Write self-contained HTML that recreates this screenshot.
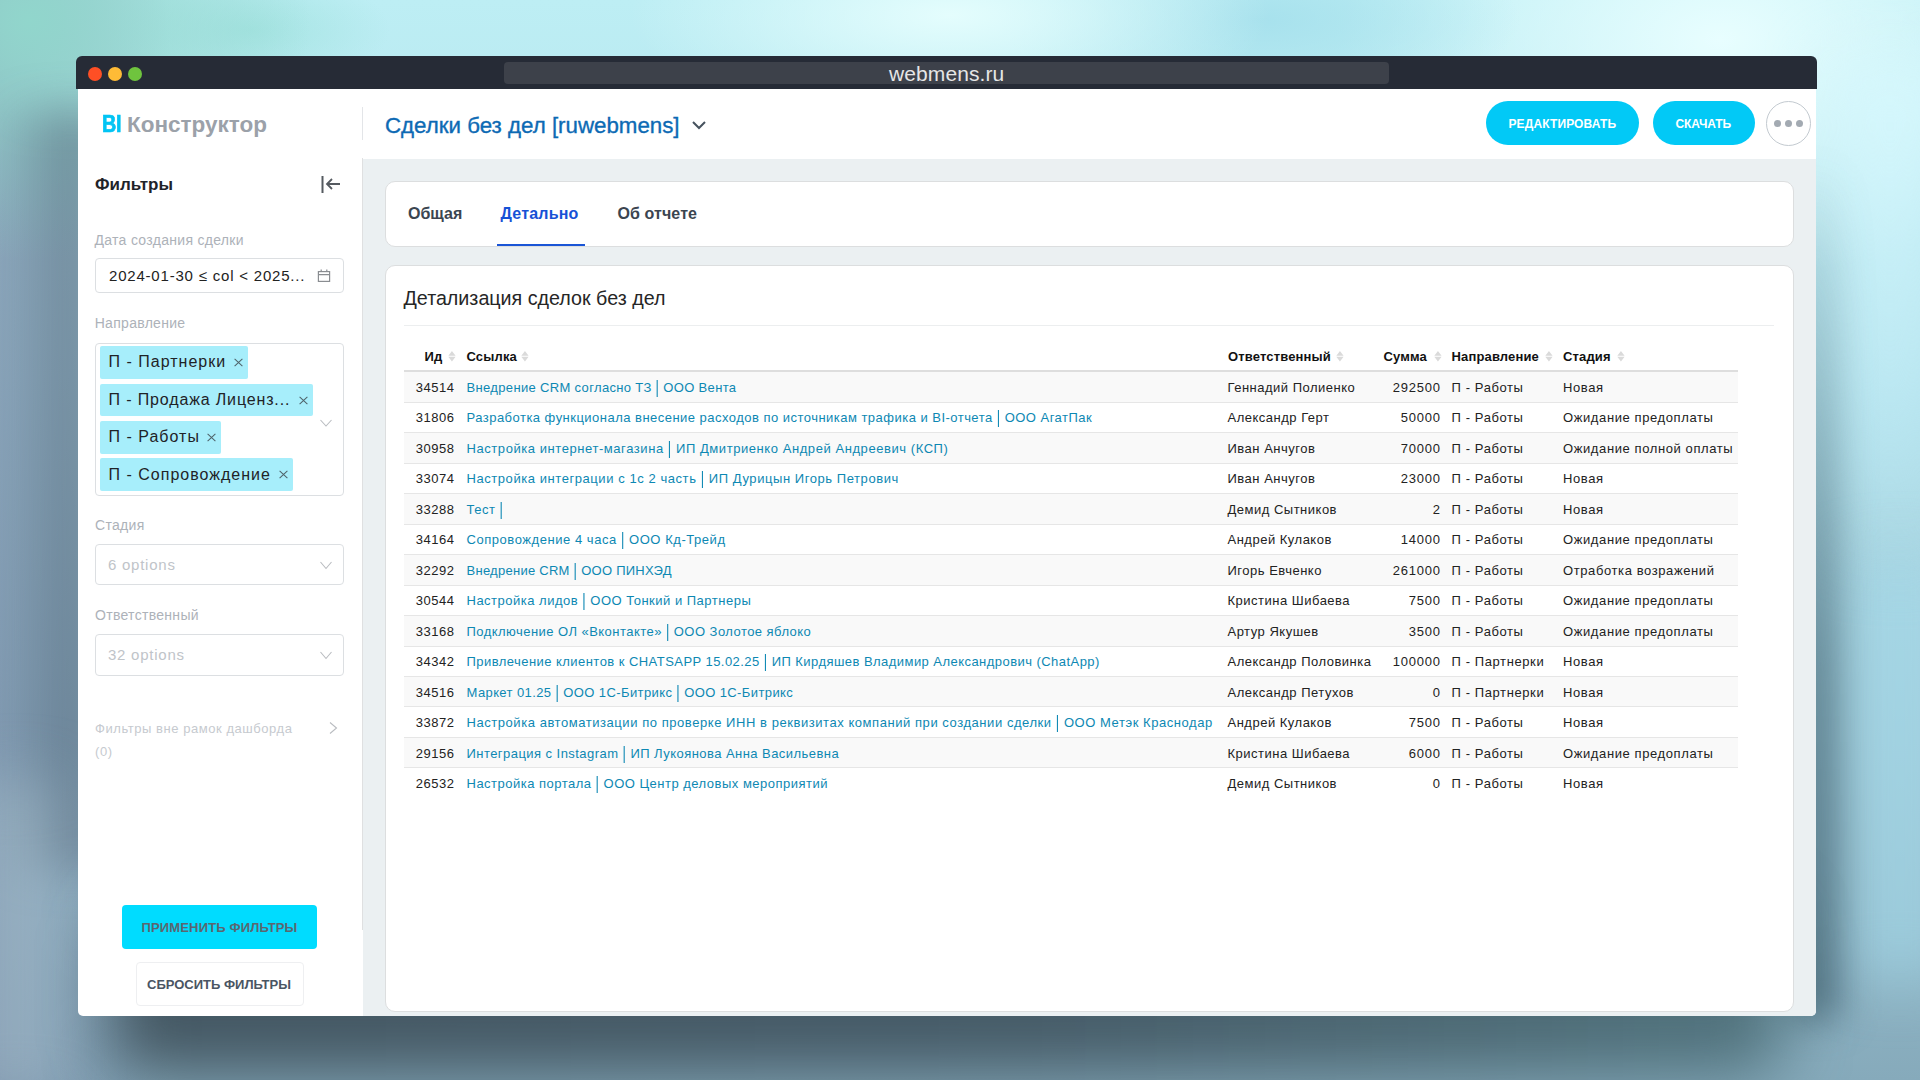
<!DOCTYPE html>
<html><head><meta charset="utf-8">
<style>
*{box-sizing:border-box;margin:0;padding:0}
html,body{width:1920px;height:1080px;overflow:hidden}
body{font-family:"Liberation Sans",sans-serif;position:relative;
background:
 radial-gradient(ellipse 280px 240px at 30px 20px, rgba(145,214,204,1) 0%, rgba(145,214,204,.6) 45%, rgba(145,214,204,0) 100%),
 radial-gradient(ellipse 140px 60px at 250px 30px, rgba(150,222,215,.6) 0%, rgba(150,222,215,0) 100%),
 radial-gradient(ellipse 320px 110px at 950px 15px, rgba(228,253,253,1) 0%, rgba(228,253,253,0) 100%),
 radial-gradient(ellipse 260px 90px at 1260px 20px, rgba(165,224,236,.9) 0%, rgba(165,224,236,0) 100%),
 radial-gradient(ellipse 380px 240px at 1720px 40px, rgba(232,254,255,1) 0%, rgba(232,254,255,0) 100%),
 linear-gradient(90deg, rgba(115,130,160,.6) 0px, rgba(115,130,160,0) 170px),
 linear-gradient(180deg,#bdeef4 0%,#b2e0ea 35%,#9cc6d4 70%,#86aabb 100%);
}
.t{position:absolute;white-space:nowrap}
.b{position:absolute}
#shadow{position:absolute;left:110px;top:900px;width:1675px;height:175px;background:linear-gradient(90deg,rgba(48,62,72,.78),rgba(48,64,75,.76) 55%,rgba(55,88,95,.68));filter:blur(32px);border-radius:40px}
#titlebar{position:absolute;left:76px;top:56px;width:1741px;height:33px;background:#262b36;border-radius:6px 6px 0 0}
.dot{position:absolute;top:67px;width:14px;height:14px;border-radius:50%}
#url{position:absolute;left:504px;top:62px;width:885px;height:22px;background:#3d414a;border-radius:4px}
#win{position:absolute;left:78px;top:89px;width:1738px;height:927px;background:#fff;border-radius:0 0 5px 5px;overflow:hidden}
#main{position:absolute;left:363px;top:159px;width:1453px;height:857px;background:#ebf0f2;border-radius:0 0 5px 0}
.card{position:absolute;left:385px;width:1409px;background:#fff;border:1px solid #dcdedf;border-radius:10px}
.pill{position:absolute;top:101px;height:44px;border-radius:22px;background:#02c9f6}
.inp{position:absolute;left:95px;width:249px;border:1px solid #dcdfe2;border-radius:4px;background:#fff}
.tag{position:absolute;left:100px;height:32.5px;background:#a7eefb;border-radius:2px}
.row{position:absolute;left:404px;width:1334px;height:30.48px;border-bottom:1px solid #e6e6e6}
.odd{background:#f9f9f9}
.lk{color:#1a8db5}
.tb{color:#222;letter-spacing:.5px}
</style></head>
<body>
<div class="b" style="left:10px;top:110px;width:90px;height:760px;background:linear-gradient(90deg,rgba(65,80,100,.15),rgba(65,80,100,.6));filter:blur(22px)"></div>
<div class="b" style="left:1830px;top:60px;width:120px;height:520px;background:linear-gradient(180deg,rgba(215,248,253,.9),rgba(190,235,246,.6) 70%,rgba(190,235,246,0));filter:blur(30px)"></div>
<div class="b" style="left:1850px;top:560px;width:100px;height:420px;background:rgba(165,218,235,.6);filter:blur(30px)"></div>
<div class="b" style="left:1790px;top:160px;width:50px;height:860px;background:linear-gradient(180deg,rgba(50,80,95,0),rgba(50,80,95,.25) 25%,rgba(50,80,95,.55) 60%,rgba(50,80,95,.6));filter:blur(18px)"></div>
<div class="b" style="left:-30px;top:780px;width:90px;height:320px;background:rgba(175,200,210,.45);filter:blur(30px)"></div>
<div id="shadow"></div>
<div id="titlebar"></div>
<div class="dot" style="left:88px;background:#fe4f25"></div>
<div class="dot" style="left:108px;background:#febb36"></div>
<div class="dot" style="left:128px;background:#6fc43e"></div>
<div id="url"></div>
<div class="t" style="left:889.00px;top:62.62px;font-size:21px;line-height:21px;color:#e6e6e6;letter-spacing:.1px;">webmens.ru</div>
<div id="win"></div>
<div id="main"></div>
<div class="t" style="left:101.60px;top:113.43px;font-size:23px;line-height:23px;color:#02c4f4;font-weight:bold;letter-spacing:-.3px;transform:scaleX(.86);transform-origin:0 0;-webkit-text-stroke:.7px #02c4f4;">BI</div>
<div class="t" style="left:127.00px;top:113.85px;font-size:22.5px;line-height:22.5px;color:#9ba1a9;font-weight:bold;letter-spacing:0px;">Конструктор</div>
<div class="b" style="left:362px;top:107px;width:1px;height:33px;background:#e3e5e8"></div>
<div class="t" style="left:385.00px;top:115.02px;font-size:22.3px;line-height:22.3px;color:#0d6ab4;-webkit-text-stroke:.35px #0d6ab4;">Сделки без дел [ruwebmens]</div>
<svg class="b" style="left:690px;top:118px" width="18" height="14" viewBox="0 0 18 14"><path d="M3 4 L9 10 L15 4" fill="none" stroke="#46525e" stroke-width="2"/></svg>
<div class="pill" style="left:1486px;width:153px"></div>
<div class="t" style="left:1508.50px;top:117.84px;font-size:12px;line-height:12px;color:#fff;font-weight:bold;letter-spacing:.12px;">РЕДАКТИРОВАТЬ</div>
<div class="pill" style="left:1653px;width:102px"></div>
<div class="t" style="left:1675.50px;top:117.84px;font-size:12px;line-height:12px;color:#fff;font-weight:bold;letter-spacing:-.1px;">СКАЧАТЬ</div>
<div class="b" style="left:1766px;top:101px;width:45px;height:45px;border-radius:50%;border:1px solid #c3cad0;background:#fff"></div>
<div class="b" style="left:1774.0px;top:120px;width:7px;height:7px;border-radius:50%;background:#a3aab2"></div>
<div class="b" style="left:1785.0px;top:120px;width:7px;height:7px;border-radius:50%;background:#a3aab2"></div>
<div class="b" style="left:1796.0px;top:120px;width:7px;height:7px;border-radius:50%;background:#a3aab2"></div>
<div class="b" style="left:362px;top:158.4px;width:1px;height:772px;background:#dfe0e1"></div>
<div class="t" style="left:95.00px;top:175.61px;font-size:17px;line-height:17px;color:#1f2329;font-weight:bold;">Фильтры</div>
<svg class="b" style="left:318px;top:174px" width="26" height="20" viewBox="0 0 26 20"><path d="M4.5 2 V19" stroke="#555a60" stroke-width="2" fill="none"/><path d="M22 10 H9 M14 5 L9 10 L14 15" stroke="#555a60" stroke-width="1.8" fill="none"/></svg>
<div class="t" style="left:94.50px;top:233.15px;font-size:14px;line-height:14px;color:#adb2b9;letter-spacing:.3px;">Дата создания сделки</div>
<div class="inp" style="top:258.4px;height:35px"></div>
<div class="t" style="left:109.00px;top:268.30px;font-size:15px;line-height:15px;color:#222;letter-spacing:.8px;">2024-01-30 ≤ col &lt; 2025...</div>
<svg class="b" style="left:316px;top:268px" width="16" height="16" viewBox="0 0 16 16"><rect x="2.4" y="3.6" width="11.2" height="9.8" fill="none" stroke="#8a8d91" stroke-width="1.2"/><path d="M2.4 6.6 H13.6 M5.2 1.6 V4 M10.8 1.6 V4" stroke="#8a8d91" stroke-width="1.2"/></svg>
<div class="t" style="left:94.70px;top:316.15px;font-size:14px;line-height:14px;color:#adb2b9;letter-spacing:.3px;">Направление</div>
<div class="inp" style="top:342.5px;height:153px"></div>
<div class="tag" style="top:346px;width:148px"></div>
<div class="t" style="left:108.60px;top:354.36px;font-size:16px;line-height:16px;color:#1f2327;letter-spacing:1px;">П - Партнерки</div>
<svg class="b" style="left:234px;top:358px" width="9" height="9" viewBox="0 0 9 9"><path d="M0.6 0.8 L8.4 8.2 M8.4 0.8 L0.6 8.2" stroke="#4f636a" stroke-width="1.05"/></svg>
<div class="tag" style="top:383.5px;width:213px"></div>
<div class="t" style="left:108.60px;top:391.86px;font-size:16px;line-height:16px;color:#1f2327;letter-spacing:.85px;">П - Продажа Лиценз...</div>
<svg class="b" style="left:299px;top:395.5px" width="9" height="9" viewBox="0 0 9 9"><path d="M0.6 0.8 L8.4 8.2 M8.4 0.8 L0.6 8.2" stroke="#4f636a" stroke-width="1.05"/></svg>
<div class="tag" style="top:421px;width:121px"></div>
<div class="t" style="left:108.60px;top:429.36px;font-size:16px;line-height:16px;color:#1f2327;letter-spacing:1px;">П - Работы</div>
<svg class="b" style="left:207px;top:433px" width="9" height="9" viewBox="0 0 9 9"><path d="M0.6 0.8 L8.4 8.2 M8.4 0.8 L0.6 8.2" stroke="#4f636a" stroke-width="1.05"/></svg>
<div class="tag" style="top:458.3px;width:193px"></div>
<div class="t" style="left:108.60px;top:466.66px;font-size:16px;line-height:16px;color:#1f2327;letter-spacing:1px;">П - Сопровождение</div>
<svg class="b" style="left:279px;top:470.3px" width="9" height="9" viewBox="0 0 9 9"><path d="M0.6 0.8 L8.4 8.2 M8.4 0.8 L0.6 8.2" stroke="#4f636a" stroke-width="1.05"/></svg>
<svg class="b" style="left:319px;top:418px" width="14" height="11" viewBox="0 0 14 11"><path d="M1.5 2 L7 8 L12.5 2" fill="none" stroke="#b9bcc0" stroke-width="1.1"/></svg>
<div class="t" style="left:95.00px;top:518.45px;font-size:14px;line-height:14px;color:#adb2b9;letter-spacing:.3px;">Стадия</div>
<div class="inp" style="top:544.2px;height:41.3px"></div>
<div class="t" style="left:108.00px;top:557.30px;font-size:15px;line-height:15px;color:#c0c4c9;letter-spacing:.75px;">6 options</div>
<svg class="b" style="left:319px;top:560px" width="14" height="11" viewBox="0 0 14 11"><path d="M1.5 2 L7 8.5 L12.5 2" fill="none" stroke="#b9bcc0" stroke-width="1.1"/></svg>
<div class="t" style="left:95.00px;top:608.15px;font-size:14px;line-height:14px;color:#adb2b9;letter-spacing:.3px;">Ответственный</div>
<div class="inp" style="top:634px;height:41.5px"></div>
<div class="t" style="left:108.00px;top:647.30px;font-size:15px;line-height:15px;color:#c0c4c9;letter-spacing:.75px;">32 options</div>
<svg class="b" style="left:319px;top:650px" width="14" height="11" viewBox="0 0 14 11"><path d="M1.5 2 L7 8.5 L12.5 2" fill="none" stroke="#b9bcc0" stroke-width="1.1"/></svg>
<div class="t" style="left:95.00px;top:722.30px;font-size:13px;line-height:13px;color:#c6cacf;letter-spacing:.55px;">Фильтры вне рамок дашборда</div>
<div class="t" style="left:95.00px;top:745.00px;font-size:13px;line-height:13px;color:#c6cacf;letter-spacing:.55px;">(0)</div>
<svg class="b" style="left:327px;top:720px" width="12" height="16" viewBox="0 0 12 16"><path d="M3 2.5 L9.5 8 L3 13.5" fill="none" stroke="#b9bcc0" stroke-width="1.1"/></svg>
<div class="b" style="left:122px;top:905px;width:195px;height:44px;border-radius:4px;background:#00dcff"></div>
<div class="t" style="left:141.50px;top:921.00px;font-size:13px;line-height:13px;color:#5b6670;font-weight:bold;letter-spacing:.15px;">ПРИМЕНИТЬ ФИЛЬТРЫ</div>
<div class="b" style="left:135.5px;top:962.4px;width:168px;height:43.4px;border-radius:4px;border:1px solid #eeeff1;background:#fff"></div>
<div class="t" style="left:147.00px;top:978.00px;font-size:13px;line-height:13px;color:#4a5563;font-weight:bold;">СБРОСИТЬ ФИЛЬТРЫ</div>
<div class="card" style="top:181.3px;height:65.3px"></div>
<div class="t" style="left:408.00px;top:205.86px;font-size:16px;line-height:16px;color:#3b4550;font-weight:bold;">Общая</div>
<div class="t" style="left:500.50px;top:205.86px;font-size:16px;line-height:16px;color:#1651d6;font-weight:bold;letter-spacing:.2px;">Детально</div>
<div class="b" style="left:497px;top:243.5px;width:88px;height:2.5px;background:#1a55d6"></div>
<div class="t" style="left:617.50px;top:205.86px;font-size:16px;line-height:16px;color:#3b4550;font-weight:bold;letter-spacing:.1px;">Об отчете</div>
<div class="card" style="top:265.2px;height:747px"></div>
<div class="t" style="left:403.50px;top:288.82px;font-size:19.7px;line-height:19.7px;color:#262626;">Детализация сделок без дел</div>
<div class="b" style="left:404px;top:325px;width:1370px;height:1px;background:#eceeef"></div>
<div class="t" style="left:424.50px;top:349.80px;font-size:13px;line-height:13px;color:#111;font-weight:bold;letter-spacing:.15px;">Ид</div>
<svg class="b" style="left:447.6px;top:351.2px" width="8" height="11" viewBox="0 0 8 11"><path d="M0.3 4.7 L3.95 0 L7.6 4.7 Z M0.3 5.7 L3.95 10.4 L7.6 5.7 Z" fill="#dadada"/></svg>
<div class="t" style="left:466.50px;top:349.80px;font-size:13px;line-height:13px;color:#111;font-weight:bold;letter-spacing:.15px;">Ссылка</div>
<svg class="b" style="left:521.4px;top:351.2px" width="8" height="11" viewBox="0 0 8 11"><path d="M0.3 4.7 L3.95 0 L7.6 4.7 Z M0.3 5.7 L3.95 10.4 L7.6 5.7 Z" fill="#dadada"/></svg>
<div class="t" style="left:1228.00px;top:349.80px;font-size:13px;line-height:13px;color:#111;font-weight:bold;letter-spacing:.15px;">Ответственный</div>
<svg class="b" style="left:1335.6px;top:351.2px" width="8" height="11" viewBox="0 0 8 11"><path d="M0.3 4.7 L3.95 0 L7.6 4.7 Z M0.3 5.7 L3.95 10.4 L7.6 5.7 Z" fill="#dadada"/></svg>
<div class="t" style="left:1383.50px;top:349.80px;font-size:13px;line-height:13px;color:#111;font-weight:bold;letter-spacing:.15px;">Сумма</div>
<svg class="b" style="left:1433.6px;top:351.2px" width="8" height="11" viewBox="0 0 8 11"><path d="M0.3 4.7 L3.95 0 L7.6 4.7 Z M0.3 5.7 L3.95 10.4 L7.6 5.7 Z" fill="#dadada"/></svg>
<div class="t" style="left:1451.50px;top:349.80px;font-size:13px;line-height:13px;color:#111;font-weight:bold;letter-spacing:.15px;">Направление</div>
<svg class="b" style="left:1544.6px;top:351.2px" width="8" height="11" viewBox="0 0 8 11"><path d="M0.3 4.7 L3.95 0 L7.6 4.7 Z M0.3 5.7 L3.95 10.4 L7.6 5.7 Z" fill="#dadada"/></svg>
<div class="t" style="left:1563.00px;top:349.80px;font-size:13px;line-height:13px;color:#111;font-weight:bold;letter-spacing:.15px;">Стадия</div>
<svg class="b" style="left:1616.6px;top:351.2px" width="8" height="11" viewBox="0 0 8 11"><path d="M0.3 4.7 L3.95 0 L7.6 4.7 Z M0.3 5.7 L3.95 10.4 L7.6 5.7 Z" fill="#dadada"/></svg>
<div class="b" style="left:404px;top:370px;width:1334px;height:2px;background:#dedede"></div>
<div class="row odd" style="top:372.20px;"></div>
<div class="t tb" style="right:1465.5px;top:380.85px;font-size:13px;line-height:13px;letter-spacing:.5px">34514</div>
<div class="t" style="left:466.50px;top:380.85px;font-size:13px;line-height:13px;color:#0d88b3;letter-spacing:0.340px;">Внедрение CRM согласно ТЗ <span style="display:inline-block;transform:scaleY(1.4);transform-origin:50% 70%">|</span> ООО Вента</div>
<div class="t" style="left:1227.50px;top:380.85px;font-size:13px;line-height:13px;color:#222;letter-spacing:.5px;">Геннадий Полиенко</div>
<div class="t tb" style="right:479.20000000000005px;top:380.85px;font-size:13px;line-height:13px;letter-spacing:.8px">292500</div>
<div class="t" style="left:1451.50px;top:380.85px;font-size:13px;line-height:13px;color:#222;letter-spacing:.6px;">П - Работы</div>
<div class="t" style="left:1563.00px;top:380.85px;font-size:13px;line-height:13px;color:#222;letter-spacing:.6px;">Новая</div>
<div class="row" style="top:402.68px;"></div>
<div class="t tb" style="right:1465.5px;top:411.33px;font-size:13px;line-height:13px;letter-spacing:.5px">31806</div>
<div class="t" style="left:466.50px;top:411.33px;font-size:13px;line-height:13px;color:#0d88b3;letter-spacing:0.474px;">Разработка функционала внесение расходов по источникам трафика и BI-отчета <span style="display:inline-block;transform:scaleY(1.4);transform-origin:50% 70%">|</span> ООО АгатПак</div>
<div class="t" style="left:1227.50px;top:411.33px;font-size:13px;line-height:13px;color:#222;letter-spacing:.5px;">Александр Герт</div>
<div class="t tb" style="right:479.20000000000005px;top:411.33px;font-size:13px;line-height:13px;letter-spacing:.8px">50000</div>
<div class="t" style="left:1451.50px;top:411.33px;font-size:13px;line-height:13px;color:#222;letter-spacing:.6px;">П - Работы</div>
<div class="t" style="left:1563.00px;top:411.33px;font-size:13px;line-height:13px;color:#222;letter-spacing:.6px;">Ожидание предоплаты</div>
<div class="row odd" style="top:433.16px;"></div>
<div class="t tb" style="right:1465.5px;top:441.81px;font-size:13px;line-height:13px;letter-spacing:.5px">30958</div>
<div class="t" style="left:466.50px;top:441.81px;font-size:13px;line-height:13px;color:#0d88b3;letter-spacing:0.565px;">Настройка интернет-магазина <span style="display:inline-block;transform:scaleY(1.4);transform-origin:50% 70%">|</span> ИП Дмитриенко Андрей Андреевич (КСП)</div>
<div class="t" style="left:1227.50px;top:441.81px;font-size:13px;line-height:13px;color:#222;letter-spacing:.5px;">Иван Анчугов</div>
<div class="t tb" style="right:479.20000000000005px;top:441.81px;font-size:13px;line-height:13px;letter-spacing:.8px">70000</div>
<div class="t" style="left:1451.50px;top:441.81px;font-size:13px;line-height:13px;color:#222;letter-spacing:.6px;">П - Работы</div>
<div class="t" style="left:1563.00px;top:441.81px;font-size:13px;line-height:13px;color:#222;letter-spacing:.6px;">Ожидание полной оплаты</div>
<div class="row" style="top:463.64px;"></div>
<div class="t tb" style="right:1465.5px;top:472.29px;font-size:13px;line-height:13px;letter-spacing:.5px">33074</div>
<div class="t" style="left:466.50px;top:472.29px;font-size:13px;line-height:13px;color:#0d88b3;letter-spacing:0.563px;">Настройка интеграции с 1с 2 часть <span style="display:inline-block;transform:scaleY(1.4);transform-origin:50% 70%">|</span> ИП Дурицын Игорь Петрович</div>
<div class="t" style="left:1227.50px;top:472.29px;font-size:13px;line-height:13px;color:#222;letter-spacing:.5px;">Иван Анчугов</div>
<div class="t tb" style="right:479.20000000000005px;top:472.29px;font-size:13px;line-height:13px;letter-spacing:.8px">23000</div>
<div class="t" style="left:1451.50px;top:472.29px;font-size:13px;line-height:13px;color:#222;letter-spacing:.6px;">П - Работы</div>
<div class="t" style="left:1563.00px;top:472.29px;font-size:13px;line-height:13px;color:#222;letter-spacing:.6px;">Новая</div>
<div class="row odd" style="top:494.12px;"></div>
<div class="t tb" style="right:1465.5px;top:502.77px;font-size:13px;line-height:13px;letter-spacing:.5px">33288</div>
<div class="t" style="left:466.50px;top:502.77px;font-size:13px;line-height:13px;color:#0d88b3;letter-spacing:0.520px;">Тест <span style="display:inline-block;transform:scaleY(1.4);transform-origin:50% 70%">|</span></div>
<div class="t" style="left:1227.50px;top:502.77px;font-size:13px;line-height:13px;color:#222;letter-spacing:.5px;">Демид Сытников</div>
<div class="t tb" style="right:479.20000000000005px;top:502.77px;font-size:13px;line-height:13px;letter-spacing:.8px">2</div>
<div class="t" style="left:1451.50px;top:502.77px;font-size:13px;line-height:13px;color:#222;letter-spacing:.6px;">П - Работы</div>
<div class="t" style="left:1563.00px;top:502.77px;font-size:13px;line-height:13px;color:#222;letter-spacing:.6px;">Новая</div>
<div class="row" style="top:524.60px;"></div>
<div class="t tb" style="right:1465.5px;top:533.25px;font-size:13px;line-height:13px;letter-spacing:.5px">34164</div>
<div class="t" style="left:466.50px;top:533.25px;font-size:13px;line-height:13px;color:#0d88b3;letter-spacing:0.547px;">Сопровождение 4 часа <span style="display:inline-block;transform:scaleY(1.4);transform-origin:50% 70%">|</span> ООО Кд-Трейд</div>
<div class="t" style="left:1227.50px;top:533.25px;font-size:13px;line-height:13px;color:#222;letter-spacing:.5px;">Андрей Кулаков</div>
<div class="t tb" style="right:479.20000000000005px;top:533.25px;font-size:13px;line-height:13px;letter-spacing:.8px">14000</div>
<div class="t" style="left:1451.50px;top:533.25px;font-size:13px;line-height:13px;color:#222;letter-spacing:.6px;">П - Работы</div>
<div class="t" style="left:1563.00px;top:533.25px;font-size:13px;line-height:13px;color:#222;letter-spacing:.6px;">Ожидание предоплаты</div>
<div class="row odd" style="top:555.08px;"></div>
<div class="t tb" style="right:1465.5px;top:563.73px;font-size:13px;line-height:13px;letter-spacing:.5px">32292</div>
<div class="t" style="left:466.50px;top:563.73px;font-size:13px;line-height:13px;color:#0d88b3;letter-spacing:0.268px;">Внедрение CRM <span style="display:inline-block;transform:scaleY(1.4);transform-origin:50% 70%">|</span> ООО ПИНХЭД</div>
<div class="t" style="left:1227.50px;top:563.73px;font-size:13px;line-height:13px;color:#222;letter-spacing:.5px;">Игорь Евченко</div>
<div class="t tb" style="right:479.20000000000005px;top:563.73px;font-size:13px;line-height:13px;letter-spacing:.8px">261000</div>
<div class="t" style="left:1451.50px;top:563.73px;font-size:13px;line-height:13px;color:#222;letter-spacing:.6px;">П - Работы</div>
<div class="t" style="left:1563.00px;top:563.73px;font-size:13px;line-height:13px;color:#222;letter-spacing:.6px;">Отработка возражений</div>
<div class="row" style="top:585.56px;"></div>
<div class="t tb" style="right:1465.5px;top:594.21px;font-size:13px;line-height:13px;letter-spacing:.5px">30544</div>
<div class="t" style="left:466.50px;top:594.21px;font-size:13px;line-height:13px;color:#0d88b3;letter-spacing:0.500px;">Настройка лидов <span style="display:inline-block;transform:scaleY(1.4);transform-origin:50% 70%">|</span> ООО Тонкий и Партнеры</div>
<div class="t" style="left:1227.50px;top:594.21px;font-size:13px;line-height:13px;color:#222;letter-spacing:.5px;">Кристина Шибаева</div>
<div class="t tb" style="right:479.20000000000005px;top:594.21px;font-size:13px;line-height:13px;letter-spacing:.8px">7500</div>
<div class="t" style="left:1451.50px;top:594.21px;font-size:13px;line-height:13px;color:#222;letter-spacing:.6px;">П - Работы</div>
<div class="t" style="left:1563.00px;top:594.21px;font-size:13px;line-height:13px;color:#222;letter-spacing:.6px;">Ожидание предоплаты</div>
<div class="row odd" style="top:616.04px;"></div>
<div class="t tb" style="right:1465.5px;top:624.69px;font-size:13px;line-height:13px;letter-spacing:.5px">33168</div>
<div class="t" style="left:466.50px;top:624.69px;font-size:13px;line-height:13px;color:#0d88b3;letter-spacing:0.457px;">Подключение ОЛ «Вконтакте» <span style="display:inline-block;transform:scaleY(1.4);transform-origin:50% 70%">|</span> ООО Золотое яблоко</div>
<div class="t" style="left:1227.50px;top:624.69px;font-size:13px;line-height:13px;color:#222;letter-spacing:.5px;">Артур Якушев</div>
<div class="t tb" style="right:479.20000000000005px;top:624.69px;font-size:13px;line-height:13px;letter-spacing:.8px">3500</div>
<div class="t" style="left:1451.50px;top:624.69px;font-size:13px;line-height:13px;color:#222;letter-spacing:.6px;">П - Работы</div>
<div class="t" style="left:1563.00px;top:624.69px;font-size:13px;line-height:13px;color:#222;letter-spacing:.6px;">Ожидание предоплаты</div>
<div class="row" style="top:646.52px;"></div>
<div class="t tb" style="right:1465.5px;top:655.17px;font-size:13px;line-height:13px;letter-spacing:.5px">34342</div>
<div class="t" style="left:466.50px;top:655.17px;font-size:13px;line-height:13px;color:#0d88b3;letter-spacing:0.451px;">Привлечение клиентов к CHATSAPP 15.02.25 <span style="display:inline-block;transform:scaleY(1.4);transform-origin:50% 70%">|</span> ИП Кирдяшев Владимир Александрович (ChatApp)</div>
<div class="t" style="left:1227.50px;top:655.17px;font-size:13px;line-height:13px;color:#222;letter-spacing:.5px;">Александр Половинка</div>
<div class="t tb" style="right:479.20000000000005px;top:655.17px;font-size:13px;line-height:13px;letter-spacing:.8px">100000</div>
<div class="t" style="left:1451.50px;top:655.17px;font-size:13px;line-height:13px;color:#222;letter-spacing:.6px;">П - Партнерки</div>
<div class="t" style="left:1563.00px;top:655.17px;font-size:13px;line-height:13px;color:#222;letter-spacing:.6px;">Новая</div>
<div class="row odd" style="top:677.00px;"></div>
<div class="t tb" style="right:1465.5px;top:685.65px;font-size:13px;line-height:13px;letter-spacing:.5px">34516</div>
<div class="t" style="left:466.50px;top:685.65px;font-size:13px;line-height:13px;color:#0d88b3;letter-spacing:0.400px;">Маркет 01.25 <span style="display:inline-block;transform:scaleY(1.4);transform-origin:50% 70%">|</span> ООО 1С-Битрикс <span style="display:inline-block;transform:scaleY(1.4);transform-origin:50% 70%">|</span> ООО 1С-Битрикс</div>
<div class="t" style="left:1227.50px;top:685.65px;font-size:13px;line-height:13px;color:#222;letter-spacing:.5px;">Александр Петухов</div>
<div class="t tb" style="right:479.20000000000005px;top:685.65px;font-size:13px;line-height:13px;letter-spacing:.8px">0</div>
<div class="t" style="left:1451.50px;top:685.65px;font-size:13px;line-height:13px;color:#222;letter-spacing:.6px;">П - Партнерки</div>
<div class="t" style="left:1563.00px;top:685.65px;font-size:13px;line-height:13px;color:#222;letter-spacing:.6px;">Новая</div>
<div class="row" style="top:707.48px;"></div>
<div class="t tb" style="right:1465.5px;top:716.13px;font-size:13px;line-height:13px;letter-spacing:.5px">33872</div>
<div class="t" style="left:466.50px;top:716.13px;font-size:13px;line-height:13px;color:#0d88b3;letter-spacing:0.554px;">Настройка автоматизации по проверке ИНН в реквизитах компаний при создании сделки <span style="display:inline-block;transform:scaleY(1.4);transform-origin:50% 70%">|</span> ООО Метэк Краснодар</div>
<div class="t" style="left:1227.50px;top:716.13px;font-size:13px;line-height:13px;color:#222;letter-spacing:.5px;">Андрей Кулаков</div>
<div class="t tb" style="right:479.20000000000005px;top:716.13px;font-size:13px;line-height:13px;letter-spacing:.8px">7500</div>
<div class="t" style="left:1451.50px;top:716.13px;font-size:13px;line-height:13px;color:#222;letter-spacing:.6px;">П - Работы</div>
<div class="t" style="left:1563.00px;top:716.13px;font-size:13px;line-height:13px;color:#222;letter-spacing:.6px;">Новая</div>
<div class="row odd" style="top:737.96px;"></div>
<div class="t tb" style="right:1465.5px;top:746.61px;font-size:13px;line-height:13px;letter-spacing:.5px">29156</div>
<div class="t" style="left:466.50px;top:746.61px;font-size:13px;line-height:13px;color:#0d88b3;letter-spacing:0.452px;">Интеграция с Instagram <span style="display:inline-block;transform:scaleY(1.4);transform-origin:50% 70%">|</span> ИП Лукоянова Анна Васильевна</div>
<div class="t" style="left:1227.50px;top:746.61px;font-size:13px;line-height:13px;color:#222;letter-spacing:.5px;">Кристина Шибаева</div>
<div class="t tb" style="right:479.20000000000005px;top:746.61px;font-size:13px;line-height:13px;letter-spacing:.8px">6000</div>
<div class="t" style="left:1451.50px;top:746.61px;font-size:13px;line-height:13px;color:#222;letter-spacing:.6px;">П - Работы</div>
<div class="t" style="left:1563.00px;top:746.61px;font-size:13px;line-height:13px;color:#222;letter-spacing:.6px;">Ожидание предоплаты</div>
<div class="row" style="top:768.44px;border-bottom:none;"></div>
<div class="t tb" style="right:1465.5px;top:777.09px;font-size:13px;line-height:13px;letter-spacing:.5px">26532</div>
<div class="t" style="left:466.50px;top:777.09px;font-size:13px;line-height:13px;color:#0d88b3;letter-spacing:0.490px;">Настройка портала <span style="display:inline-block;transform:scaleY(1.4);transform-origin:50% 70%">|</span> ООО Центр деловых мероприятий</div>
<div class="t" style="left:1227.50px;top:777.09px;font-size:13px;line-height:13px;color:#222;letter-spacing:.5px;">Демид Сытников</div>
<div class="t tb" style="right:479.20000000000005px;top:777.09px;font-size:13px;line-height:13px;letter-spacing:.8px">0</div>
<div class="t" style="left:1451.50px;top:777.09px;font-size:13px;line-height:13px;color:#222;letter-spacing:.6px;">П - Работы</div>
<div class="t" style="left:1563.00px;top:777.09px;font-size:13px;line-height:13px;color:#222;letter-spacing:.6px;">Новая</div>
</body></html>
